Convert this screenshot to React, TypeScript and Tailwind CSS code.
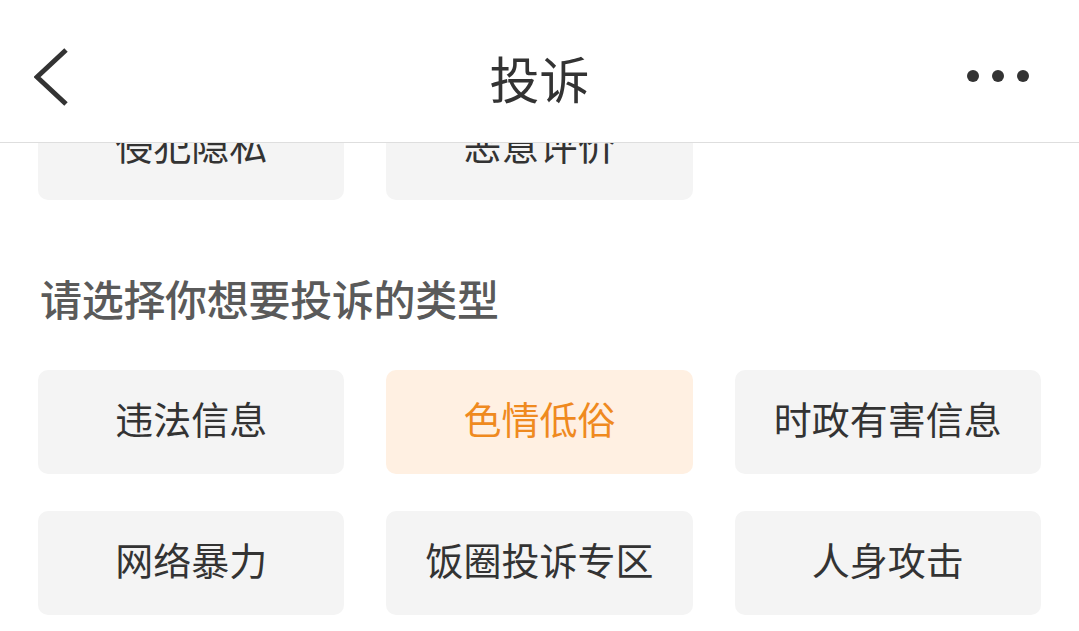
const font = { fontFamily: '"Noto Sans CJK SC", "Noto Sans", sans-serif' }

const topRow = ['侵犯隐私', '恶意评价']
const types = ['违法信息', '色情低俗', '时政有害信息', '网络暴力', '饭圈投诉专区', '人身攻击']

function Card({ label, active }: { label: string; active?: boolean }) {
  return (
    <div
      className={
        'h-[104px] pb-[9px] rounded-[10px] flex items-center justify-center text-[38px] ' +
        (active ? 'bg-[#fff0e2] text-[#ef8a1f]' : 'bg-[#f4f4f4] text-[#333333]')
      }
    >
      {label}
    </div>
  )
}

export default function App() {
  return (
    <div className="w-[1079px] h-[631px] bg-white overflow-hidden flex flex-col" style={font}>
      <header className="relative z-10 h-[143px] shrink-0 bg-white border-b border-[#dedede] flex items-center justify-between px-[34px]">
        <svg width="36" height="60" viewBox="0 0 36 60" className="mt-[12px]">
          <path d="M32 3 L3 30 L32 57" fill="none" stroke="#333" strokeWidth="5" strokeLinejoin="miter" />
        </svg>
        <h1 className="absolute left-0 right-0 text-center text-[50px] text-[#333333] leading-none top-[52px]">投诉</h1>
        <div className="flex gap-[13px] mt-[10px] mr-[16px]">
          <span className="w-[12px] h-[12px] rounded-full bg-[#333]" />
          <span className="w-[12px] h-[12px] rounded-full bg-[#333]" />
          <span className="w-[12px] h-[12px] rounded-full bg-[#333]" />
        </div>
      </header>
      <main className="flex-1 overflow-hidden">
        <div className="-mt-[47px] px-[38px]">
          <div className="grid grid-cols-3 gap-x-[42px]">
            {topRow.map(t => (
              <Card key={t} label={t} />
            ))}
          </div>
          <h2 className="mt-[77px] ml-[2px] text-[42px] leading-none text-[#5a5a5a] font-medium tracking-[-0.3px]">
            请选择你想要投诉的类型
          </h2>
          <div className="mt-[51px] grid grid-cols-3 gap-x-[42px] gap-y-[37px]">
            {types.map(t => (
              <Card key={t} label={t} active={t === '色情低俗'} />
            ))}
          </div>
        </div>
      </main>
    </div>
  )
}
